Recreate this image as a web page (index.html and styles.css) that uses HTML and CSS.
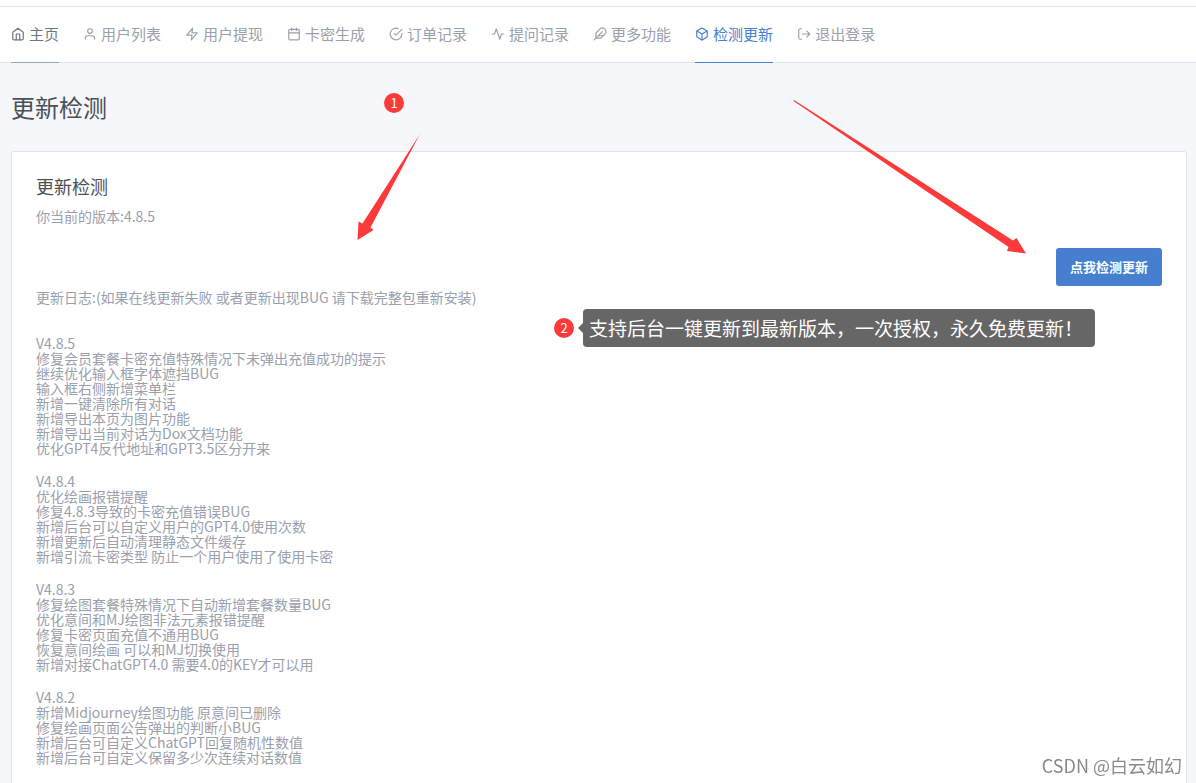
FILE: index.html
```html
<!DOCTYPE html>
<html lang="zh-CN">
<head>
<meta charset="utf-8">
<meta name="viewport" content="width=device-width, initial-scale=1">
<title>更新检测</title>
<link rel="stylesheet" href="styles.css">
</head>
<body>
<header class="header">
  <nav class="nav">
    <a class="nav-link home" href="#"><svg class="icon" viewBox="0 0 24 24"><path d="M3 9l9-7 9 7v11a2 2 0 0 1-2 2H5a2 2 0 0 1-2-2z"/><path d="M9 22V12h6v10"/></svg>主页</a>
    <a class="nav-link" href="#"><svg class="icon" viewBox="0 0 24 24"><path d="M20 21v-2a4 4 0 0 0-4-4H8a4 4 0 0 0-4 4v2"/><circle cx="12" cy="7" r="4"/></svg>用户列表</a>
    <a class="nav-link" href="#"><svg class="icon" viewBox="0 0 24 24"><path d="M13 2L3 14h9l-1 8 10-12h-9l1-8z"/></svg>用户提现</a>
    <a class="nav-link" href="#"><svg class="icon" viewBox="0 0 24 24"><rect x="3" y="4" width="18" height="18" rx="2"/><path d="M16 2v4M8 2v4M3 10h18"/></svg>卡密生成</a>
    <a class="nav-link" href="#"><svg class="icon" viewBox="0 0 24 24"><path d="M22 11.08V12a10 10 0 1 1-5.93-9.14"/><path d="M22 4L12 14.01l-3-3"/></svg>订单记录</a>
    <a class="nav-link" href="#"><svg class="icon" viewBox="0 0 24 24"><path d="M22 12h-4l-3 9L9 3l-3 9H2"/></svg>提问记录</a>
    <a class="nav-link" href="#"><svg class="icon" viewBox="0 0 24 24"><path d="M20.24 12.24a6 6 0 0 0-8.49-8.49L5 10.5V19h8.5z"/><path d="M16 8L2 22M17.5 15H9"/></svg>更多功能</a>
    <a class="nav-link active" href="#" aria-current="page"><svg class="icon" viewBox="0 0 24 24"><path d="M21 16V8a2 2 0 0 0-1-1.73l-7-4a2 2 0 0 0-2 0l-7 4A2 2 0 0 0 3 8v8a2 2 0 0 0 1 1.73l7 4a2 2 0 0 0 2 0l7-4A2 2 0 0 0 21 16z"/><path d="M3.27 6.96L12 12.01l8.73-5.05M12 22.08V12"/></svg>检测更新</a>
    <a class="nav-link" href="#"><svg class="icon" viewBox="0 0 24 24"><path d="M8 3H5a2 2 0 0 0-2 2v14a2 2 0 0 0 2 2h3M17 17l5-5-5-5M22 12H9"/></svg>退出登录</a>
  </nav>
</header>

<main class="page">
  <h1 class="page-title">更新检测</h1>
  <section class="card">
    <h2 class="card-title">更新检测</h2>
    <p class="version">你当前的版本:4.8.5</p>
    <div class="actions"><button class="btn" type="button">点我检测更新</button></div>
    <p class="note">更新日志:(如果在线更新失败 或者更新出现BUG 请下载完整包重新安装)</p>
    <div class="log">
      <p>V4.8.5<br>修复会员套餐卡密充值特殊情况下未弹出充值成功的提示<br>继续优化输入框字体遮挡BUG<br>输入框右侧新增菜单栏<br>新增一键清除所有对话<br>新增导出本页为图片功能<br>新增导出当前对话为Dox文档功能<br>优化GPT4反代地址和GPT3.5区分开来</p>
      <p>V4.8.4<br>优化绘画报错提醒<br>修复4.8.3导致的卡密充值错误BUG<br>新增后台可以自定义用户的GPT4.0使用次数<br>新增更新后自动清理静态文件缓存<br>新增引流卡密类型 防止一个用户使用了使用卡密</p>
      <p>V4.8.3<br>修复绘图套餐特殊情况下自动新增套餐数量BUG<br>优化意间和MJ绘图非法元素报错提醒<br>修复卡密页面充值不通用BUG<br>恢复意间绘画 可以和MJ切换使用<br>新增对接ChatGPT4.0 需要4.0的KEY才可以用</p>
      <p>V4.8.2<br>新增Midjourney绘图功能 原意间已删除<br>修复绘画页面公告弹出的判断小BUG<br>新增后台可自定义ChatGPT回复随机性数值<br>新增后台可自定义保留多少次连续对话数值</p>
    </div>
  </section>
</main>

<svg class="arrow arrow-log" viewBox="0 0 64 108" aria-hidden="true"><path d="M63 1L13.500 94.500 16.500 97 0.500 107 1.500 88.500 5.500 90.500z"/></svg>
<svg class="arrow arrow-button" viewBox="0 0 234 154" aria-hidden="true"><path d="M1 0L220 140.500 223.500 138 233 153.500 214 151 215.500 147 0.500 1z"/></svg>
<span class="marker marker-one">1</span>
<div class="callout"><span class="marker">2</span><span class="callout-text">支持后台一键更新到最新版本，一次授权，永久免费更新！</span></div>
<div class="watermark">CSDN @白云如幻</div>
</body>
</html>
```
FILE: styles.css
```css
* {
  box-sizing: border-box;
}

body {
  position: relative;
  margin: 0;
  background: #f5f7fb;
  color: #495057;
  font-family: "Noto Sans CJK SC", sans-serif;
  font-size: 14px;
}

h1, h2, p {
  margin: 0;
  font-weight: 400;
}

.header {
  padding-top: 6px;
  background: #fff;
}

.nav {
  display: flex;
  gap: 24px;
  padding: 0 11px;
  border-top: 1px solid #dee4eb;
  box-shadow: inset 0 -1px #dee4eb;
}

.nav-link {
  display: flex;
  align-items: center;
  gap: 4px;
  height: 56px;
  padding-bottom: 2px;
  border-bottom: 1px solid transparent;
  color: #9aa0ac;
  font-size: 15px;
  text-decoration: none;
  white-space: nowrap;
}

.nav-link.home {
  border-color: #9aa5b5;
  color: #6e7687;
}

.nav-link.active {
  border-color: #467fcf;
  color: #467fcf;
}

.icon {
  width: 14px;
  height: 14px;
  fill: none;
  stroke: currentColor;
  stroke-width: 2;
  stroke-linecap: round;
  stroke-linejoin: round;
}

.page {
  padding: 28px 9px 0 11px;
}

.page-title {
  margin-bottom: 28px;
  font-size: 24px;
  line-height: 32px;
}

.card {
  padding: 23px 24px 24px;
  border: 1px solid #dee2e9;
  border-radius: 3px;
  background: #fff;
  color: #9aa0ac;
}

.card-title {
  margin-bottom: 8px;
  color: #495057;
  font-size: 18px;
  line-height: 22px;
}

.version {
  margin-bottom: 21px;
  line-height: 22px;
}

.actions {
  display: flex;
  justify-content: flex-end;
}

.btn {
  height: 38px;
  padding: 0 14px 2px;
  border: 0;
  border-radius: 3px;
  background: #467fcf;
  color: #fff;
  font-family: inherit;
  font-size: 13px;
  font-weight: 700;
}

.note {
  margin-bottom: 28px;
  line-height: 22px;
}

.log {
  display: grid;
  gap: 18px;
  line-height: 15px;
}

.arrow {
  position: absolute;
  fill: #fd3a3a;
}

.arrow-log {
  top: 133px;
  left: 357px;
  width: 64px;
  height: 108px;
}

.arrow-button {
  top: 100px;
  left: 793px;
  width: 234px;
  height: 154px;
}

.marker {
  width: 20px;
  height: 20px;
  border-radius: 50%;
  background: #fd3a3a;
  color: #fff;
  font-size: 13px;
  line-height: 20px;
  text-align: center;
}

.marker-one {
  position: absolute;
  top: 93px;
  left: 384px;
}

.callout {
  position: absolute;
  top: 309px;
  left: 554px;
  display: flex;
  align-items: center;
}

.callout::before {
  order: 1;
  margin-left: 4px;
  border: 5px solid transparent;
  border-right-color: #666;
  border-left-width: 0;
  content: "";
}

.callout-text {
  order: 2;
  padding: 0 12px 0 6px;
  border-radius: 4px;
  background: #666;
  color: #fff;
  font-size: 19px;
  line-height: 38px;
  white-space: nowrap;
}

.watermark {
  position: fixed;
  right: 14px;
  bottom: 6px;
  color: #8a8a8a;
  font-size: 18px;
  line-height: 24px;
}
```
